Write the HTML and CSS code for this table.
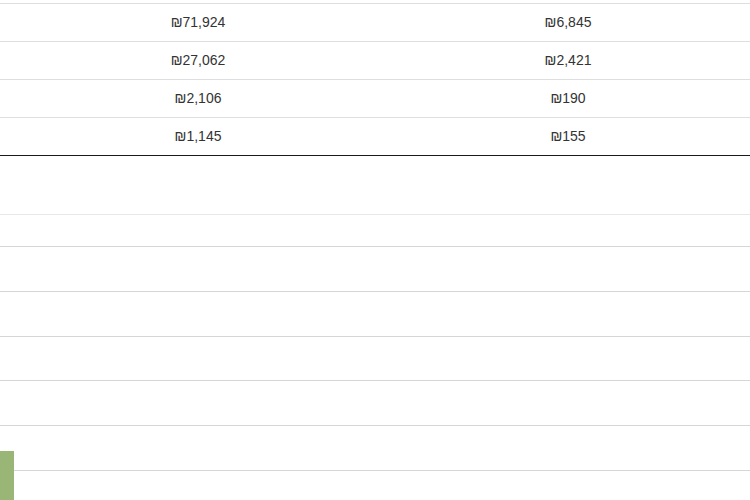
FILE: index.html
```html
<!DOCTYPE html>
<html lang="he">
<head>
<meta charset="utf-8">
<title>Table</title>
<link rel="stylesheet" href="styles.css">
</head>
<body>
<div class="page">
  <div class="totals">
    <div class="row"><div class="cell">₪71,924</div><div class="cell">₪6,845</div></div>
    <div class="row"><div class="cell">₪27,062</div><div class="cell">₪2,421</div></div>
    <div class="row"><div class="cell">₪2,106</div><div class="cell">₪190</div></div>
    <div class="row last"><div class="cell">₪1,145</div><div class="cell">₪155</div></div>
  </div>
  <div class="list">
    <div class="line first"></div>
    <div class="line"></div>
    <div class="line"></div>
    <div class="line short"></div>
    <div class="line"></div>
    <div class="line"></div>
    <div class="line"></div>
    <div class="marker"></div>
  </div>
</div>
</body>
</html>
```

FILE: styles.css
```css
html, body {
  margin: 0;
  padding: 0;
  background: #fff;
}
body {
  font-family: "Liberation Sans", Arial, sans-serif;
  font-size: 14px;
  color: #333;
  overflow: hidden;
}
.page {
  width: 750px;
  height: 500px;
  position: relative;
  overflow: hidden;
}
.totals {
  padding-top: 3px;
}
.row {
  display: grid;
  grid-template-columns: 396px 344px;
  height: 37px;
  border-top: 1px solid #dedede;
}
.row.last {
  border-bottom: 1px solid #1a1a1a;
}
.cell {
  text-align: center;
  line-height: 37px;
}
.list {
  padding-top: 58px;
}
.line {
  height: 44px;
  border-top: 1px solid #d6d6d6;
}
.line.short {
  height: 43px;
}
.line.first {
  height: 31px;
  border-top-color: #e8e8e8;
}
.marker {
  position: absolute;
  left: 0;
  top: 451px;
  width: 14px;
  height: 49px;
  background: #9ab677;
}
```
